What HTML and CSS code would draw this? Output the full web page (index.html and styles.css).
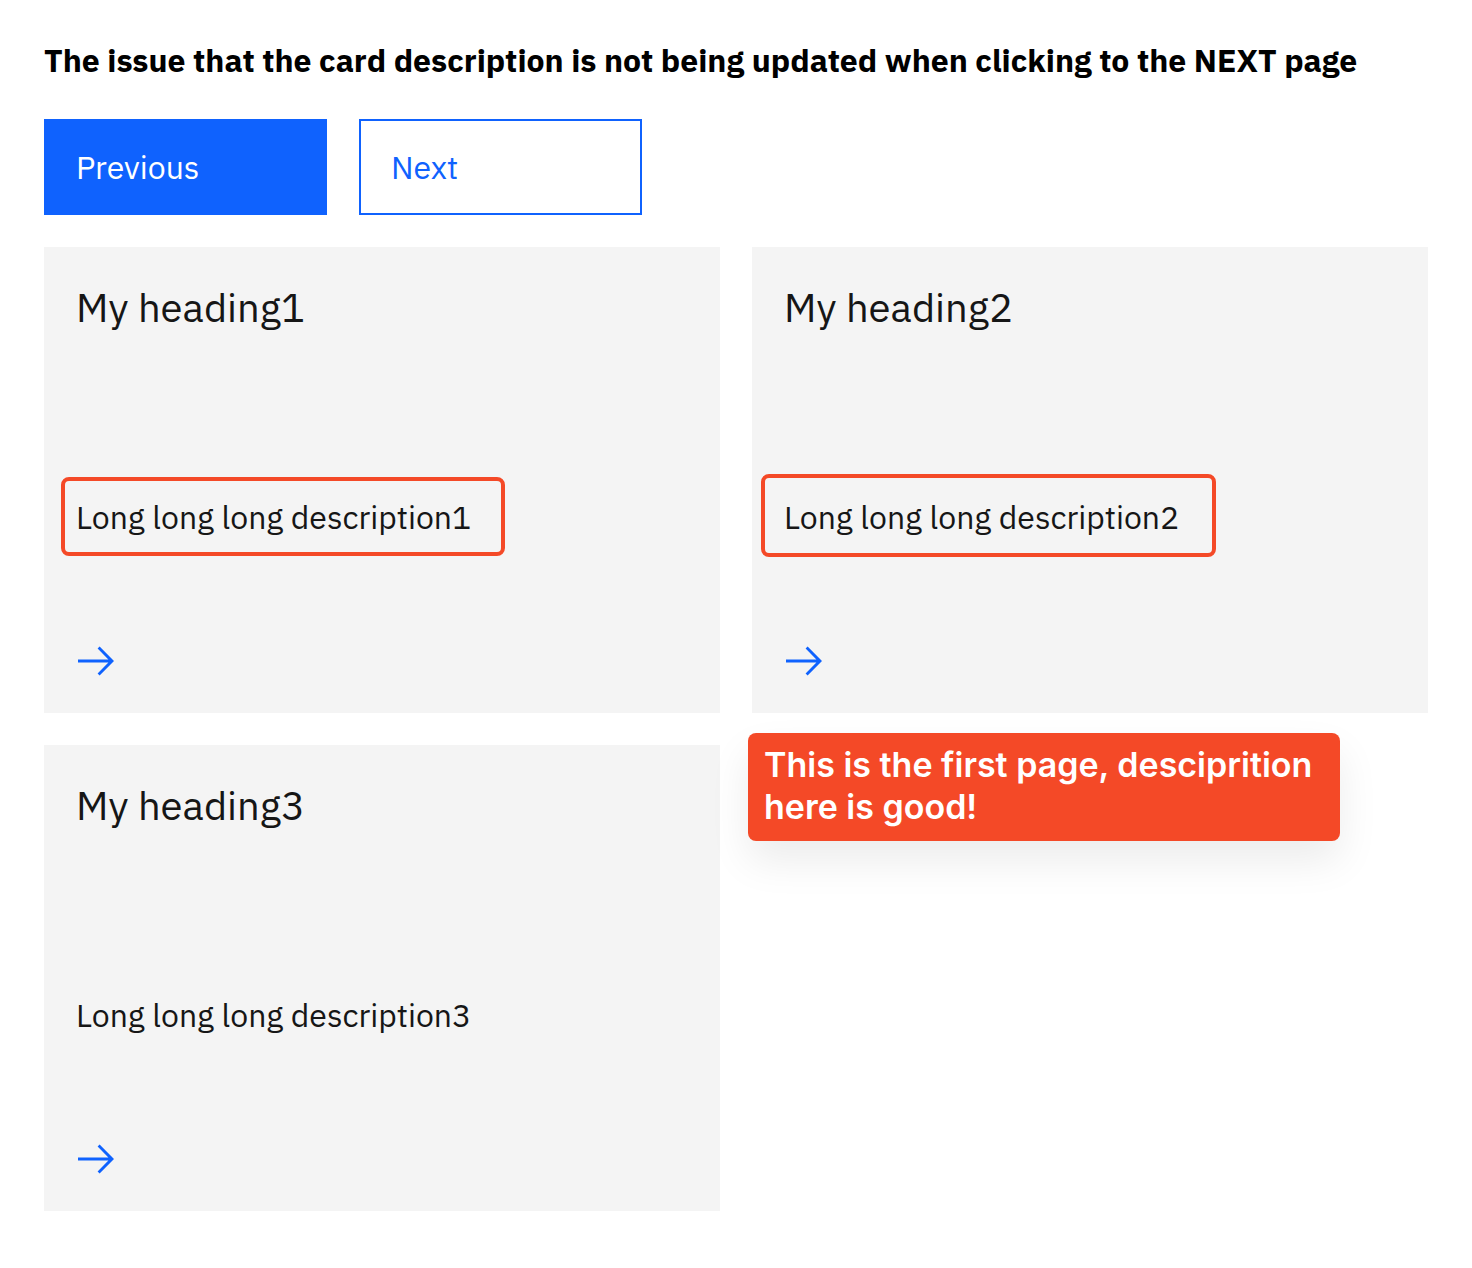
FILE: index.html
```html
<!DOCTYPE html>
<html lang="en">
<head>
<meta charset="utf-8">
<title>Card description issue</title>
<link rel="stylesheet" href="styles.css">
</head>
<body>
<main class="page">
  <h1 class="title">The issue that the card description is not being updated when clicking to the NEXT page</h1>
  <div class="actions">
    <button class="btn btn-primary" type="button">Previous</button>
    <button class="btn btn-outline" type="button">Next</button>
  </div>
  <div class="cards">
    <a class="card" href="#card1">
      <h2 class="heading">My heading1</h2>
      <p class="description"><span class="marked mark-first">Long long long description1</span></p>
      <svg class="arrow" viewBox="0 0 20 20" aria-hidden="true"><path d="M11.8 2.8 10.8 3.8 16.2 9.3H1v1.4h15.2l-5.4 5.5 1 1L19 10z"/></svg>
    </a>
    <a class="card" href="#card2">
      <h2 class="heading">My heading2</h2>
      <p class="description"><span class="marked mark-second">Long long long description2</span></p>
      <svg class="arrow" viewBox="0 0 20 20" aria-hidden="true"><path d="M11.8 2.8 10.8 3.8 16.2 9.3H1v1.4h15.2l-5.4 5.5 1 1L19 10z"/></svg>
    </a>
    <div class="cell">
      <a class="card" href="#card3">
        <h2 class="heading">My heading3</h2>
        <p class="description">Long long long description3</p>
        <svg class="arrow" viewBox="0 0 20 20" aria-hidden="true"><path d="M11.8 2.8 10.8 3.8 16.2 9.3H1v1.4h15.2l-5.4 5.5 1 1L19 10z"/></svg>
      </a>
      <p class="note">This is the first page, desciprition<br>here is good!</p>
    </div>
  </div>
</main>
</body>
</html>
```
FILE: styles.css
```css
* { box-sizing: border-box; }

body {
  margin: 0;
  background: #fff;
  color: #161616;
  font-family: "IBM Plex Sans", "Noto Sans", sans-serif;
}

.page { padding: 40px 44px 56px; }

.title {
  margin: 0 0 39px;
  color: #000;
  font-size: 32px;
  line-height: 40px;
  font-weight: 700;
}

.actions {
  display: flex;
  gap: 32px;
  margin-bottom: 32px;
}

.btn {
  width: 283px;
  height: 96px;
  padding: 0 30px;
  border: 2px solid #0f62fe;
  border-radius: 0;
  font-family: inherit;
  font-size: 32px;
  text-align: left;
}

.btn-primary { background: #0f62fe; color: #fff; }
.btn-outline { background: #fff; color: #0f62fe; }

.cards {
  display: grid;
  grid-template-columns: 1fr 1fr;
  gap: 32px;
}

.cell { position: relative; }

.card {
  display: flex;
  flex-direction: column;
  min-height: 466px;
  padding: 32px;
  background: #f4f4f4;
  color: #161616;
  text-decoration: none;
}

.heading {
  margin: 0 0 160px;
  font-size: 40px;
  line-height: 56px;
  font-weight: 400;
}

.description {
  margin: 0;
  font-size: 32px;
  line-height: 44px;
}

.marked { position: relative; }

.marked::after {
  content: "";
  position: absolute;
  border: 4px solid #f44927;
  border-radius: 8px;
}

.mark-first::after { inset: -19px -34px -18px -15px; }
.mark-second::after { inset: -22px -37px -19px -23px; }

.arrow {
  width: 40px;
  height: 40px;
  margin-top: auto;
  fill: #0f62fe;
}

.note {
  position: absolute;
  top: -12px;
  left: calc(100% + 28px);
  width: 592px;
  margin: 0;
  padding: 11px 16px 13px;
  border-radius: 8px;
  background: #f44927;
  box-shadow: 0 20px 40px rgba(0, 0, 0, 0.08);
  color: #fff;
  font-family: Inter, sans-serif;
  font-size: 34px;
  line-height: 42px;
  font-weight: 600;
  white-space: nowrap;
}
```
